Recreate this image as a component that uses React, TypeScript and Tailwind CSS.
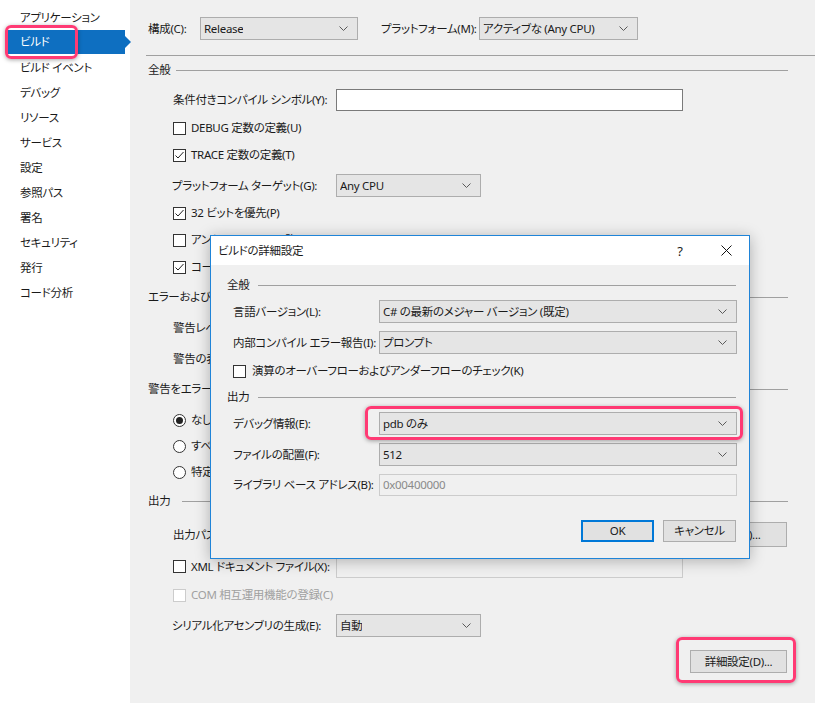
import type { ReactNode } from "react";

const navItems = [
  "アプリケーション",
  "ビルド",
  "ビルド イベント",
  "デバッグ",
  "リソース",
  "サービス",
  "設定",
  "参照パス",
  "署名",
  "セキュリティ",
  "発行",
  "コード分析",
];

function cn(...parts: (string | false | undefined)[]) {
  return parts.filter(Boolean).join(" ");
}

function Chevron() {
  return (
    <svg width="9" height="5" viewBox="0 0 9 5" className="shrink-0">
      <polyline points="0.5,0.5 4.5,4.5 8.5,0.5" fill="none" stroke="#5a5a5a" strokeWidth="1" />
    </svg>
  );
}

function Select({ value, className = "" }: { value: string; className?: string }) {
  return (
    <div
      className={`flex shrink-0 items-center justify-between border border-[#adadad] bg-[#e5e5e5] pl-[3px] pr-[9px] ${className}`}
    >
      <span className="truncate leading-[16px]">{value}</span>
      <Chevron />
    </div>
  );
}

function TextBox({
  value = "",
  disabled = false,
  className = "",
}: {
  value?: string;
  disabled?: boolean;
  className?: string;
}) {
  return (
    <div
      className={cn(
        "flex shrink-0 items-center border pl-[3px]",
        disabled ? "border-[#cccccc] bg-[#f0f0f0] text-[#8a8a8a]" : "border-[#7a7a7a] bg-white",
        className
      )}
    >
      {value}
    </div>
  );
}

function Checkbox({ checked = false, disabled = false }: { checked?: boolean; disabled?: boolean }) {
  return (
    <div
      className={cn(
        "flex h-[13px] w-[13px] shrink-0 items-center justify-center border bg-white",
        disabled ? "border-[#cccccc]" : "border-[#333333]"
      )}
    >
      {checked && (
        <svg width="11" height="11" viewBox="0 0 11 11">
          <polyline points="1.5,5.5 4,8 9.5,2" fill="none" stroke="#222" strokeWidth="1" />
        </svg>
      )}
    </div>
  );
}

function Radio({ checked = false }: { checked?: boolean }) {
  return (
    <div className="flex h-[13px] w-[13px] shrink-0 items-center justify-center rounded-full border border-[#333333] bg-white">
      {checked && <div className="h-[7px] w-[7px] rounded-full bg-[#222]" />}
    </div>
  );
}

function Button({ children, className = "" }: { children: ReactNode; className?: string }) {
  return (
    <div className={`flex shrink-0 items-center justify-center border border-[#adadad] bg-[#e1e1e1] ${className}`}>
      {children}
    </div>
  );
}

function Label({ children, className = "" }: { children: ReactNode; className?: string }) {
  return <span className={`shrink-0 whitespace-nowrap ${className}`}>{children}</span>;
}

function Section({ title, gap = "ml-[6px]", className = "" }: { title: string; gap?: string; className?: string }) {
  return (
    <div className={`flex h-[20px] items-center ${className}`}>
      <Label>{title}</Label>
      <div className={`h-px flex-1 bg-[#a0a0a0] ${gap}`} />
    </div>
  );
}

function Highlight({ className }: { className: string }) {
  return (
    <span
      className={`pointer-events-none absolute rounded-[6px] border-[3px] border-[#ff3a74] shadow-[0_1px_4px_rgba(0,0,0,0.35)] ${className}`}
    />
  );
}

function Sidebar() {
  return (
    <div className="w-[130px] shrink-0 bg-white pt-[5px]">
      {navItems.map((item) =>
        item === "ビルド" ? (
          <div key={item} className="relative h-[25px]">
            <div className="relative ml-[8px] flex h-[24px] w-[117px] items-center bg-[#0e6fc1] pl-[12px] text-white">
              {item}
              <span className="absolute right-[-6px] top-1/2 -translate-y-1/2 border-y-[6px] border-l-[6px] border-y-transparent border-l-[#0e6fc1]" />
            </div>
            <Highlight className="left-[5px] top-[-5px] h-[34px] w-[73px]" />
          </div>
        ) : (
          <div key={item} className="flex h-[25px] items-center pl-[20px]">
            {item}
          </div>
        )
      )}
    </div>
  );
}

function MainPanel() {
  return (
    <div className="flex-1 bg-[#f0f0f0] pl-[18px] pt-[17px]">
      <div className="flex h-[23px] items-center">
        <Label className="w-[52px]">構成(C):</Label>
        <Select value="Release" className="h-[23px] w-[158px]" />
        <Label className="ml-[23px] w-[98px]">プラットフォーム(M):</Label>
        <Select value="アクティブな (Any CPU)" className="h-[23px] w-[159px]" />
      </div>
      <div className="-ml-[2px] mt-[15px] h-px bg-[#a0a0a0]" />

      <Section title="全般" className="mr-[27px] mt-[4px]" />
      <div className="mt-[9px] flex h-[22px] items-center pl-[25px]">
        <Label className="w-[163px]">条件付きコンパイル シンボル(Y):</Label>
        <TextBox className="h-[22px] w-[347px]" />
      </div>
      <div className="mt-[7px] flex h-[20px] items-center pl-[25px]">
        <Checkbox />
        <Label className="ml-[5px]">DEBUG 定数の定義(U)</Label>
      </div>
      <div className="mt-[7px] flex h-[20px] items-center pl-[25px]">
        <Checkbox checked />
        <Label className="ml-[5px]">TRACE 定数の定義(T)</Label>
      </div>
      <div className="mt-[9px] flex h-[23px] items-center pl-[24px]">
        <Label className="w-[164px]">プラットフォーム ターゲット(G):</Label>
        <Select value="Any CPU" className="h-[23px] w-[145px]" />
      </div>
      <div className="mt-[6px] flex h-[20px] items-center pl-[25px]">
        <Checkbox checked />
        <Label className="ml-[5px]">32 ビットを優先(P)</Label>
      </div>
      <div className="mt-[7px] flex h-[20px] items-center pl-[25px]">
        <Checkbox />
        <Label className="ml-[5px]">アンセーフ コードの許可(F)</Label>
      </div>
      <div className="mt-[7px] flex h-[20px] items-center pl-[25px]">
        <Checkbox checked />
        <Label className="ml-[5px]">コードの最適化(Z)</Label>
      </div>

      <Section title="エラーおよび警告" className="mr-[27px] mt-[10px]" />
      <div className="mt-[10px] flex h-[22px] items-center pl-[25px]">
        <Label className="w-[163px]">警告レベル(A):</Label>
        <Select value="4" className="h-[22px] w-[145px]" />
      </div>
      <div className="mt-[9px] flex h-[22px] items-center pl-[25px]">
        <Label className="w-[163px]">警告の表示を抑制(S):</Label>
        <TextBox className="h-[22px] w-[347px]" />
      </div>

      <Section title="警告をエラーとして扱う" className="mr-[27px] mt-[9px]" />
      <div className="mt-[11px] flex h-[20px] items-center pl-[25px]">
        <Radio checked />
        <Label className="ml-[5px]">なし(N)</Label>
      </div>
      <div className="mt-[6px] flex h-[20px] items-center pl-[25px]">
        <Radio />
        <Label className="ml-[5px]">すべて(L)</Label>
      </div>
      <div className="mt-[6px] flex h-[20px] items-center pl-[25px]">
        <Radio />
        <Label className="ml-[5px]">特定の警告(W):</Label>
      </div>

      <Section title="出力" gap="ml-[12px]" className="mr-[27px] mt-[9px]" />
      <div className="mr-[28px] mt-[11px] flex h-[25px] items-center pl-[25px]">
        <Label className="w-[163px]">出力パス(O):</Label>
        <TextBox value="bin\Release\" className="h-[22px] w-[347px]" />
        <Button className="ml-auto h-[25px] w-[97px]">参照(R)...</Button>
      </div>
      <div className="mt-[8px] flex h-[23px] items-center pl-[25px]">
        <Checkbox />
        <Label className="ml-[5px] w-[145px]">XML ドキュメント ファイル(X):</Label>
        <TextBox disabled className="h-[23px] w-[347px]" />
      </div>
      <div className="mt-[7px] flex h-[20px] items-center pl-[25px] text-[#a0a0a0]">
        <Checkbox disabled />
        <Label className="ml-[5px]">COM 相互運用機能の登録(C)</Label>
      </div>
      <div className="mt-[9px] flex h-[23px] items-center pl-[24px]">
        <Label className="w-[164px]">シリアル化アセンブリの生成(E):</Label>
        <Select value="自動" className="h-[23px] w-[145px]" />
      </div>
      <div className="mr-[28px] mt-[13px] flex justify-end">
        <div className="relative">
          <Button className="h-[23px] w-[97px] whitespace-nowrap">詳細設定(D)...</Button>
          <Highlight className="-bottom-[10px] -left-[14px] -right-[9px] -top-[13px]" />
        </div>
      </div>
    </div>
  );
}

function AdvancedDialog() {
  return (
    <div className="absolute left-[210px] top-[235px] flex h-[324px] w-[540px] flex-col border border-[#1f84d8] bg-[#f0f0f0] shadow-[0_2px_14px_rgba(0,0,0,0.28)]">
      <div className="flex h-[29px] shrink-0 items-center bg-white pl-[7px]">
        <Label>ビルドの詳細設定</Label>
        <span className="ml-auto w-[46px] text-center text-[13px]">?</span>
        <span className="flex w-[46px] justify-center">
          <svg width="11" height="11" viewBox="0 0 11 11">
            <path d="M0.5 0.5 L10.5 10.5 M10.5 0.5 L0.5 10.5" stroke="#111" strokeWidth="1" />
          </svg>
        </span>
      </div>
      <div className="pl-[16px] pr-[12px] pt-[10px]">
        <Section title="全般" gap="ml-[9px]" className="mr-px" />
        <div className="mt-[5px] flex h-[23px] items-center pl-[6px]">
          <Label className="w-[146px]">言語バージョン(L):</Label>
          <Select value="C# の最新のメジャー バージョン (既定)" className="h-[23px] flex-1" />
        </div>
        <div className="mt-[8px] flex h-[23px] items-center pl-[6px]">
          <Label className="w-[146px]">内部コンパイル エラー報告(I):</Label>
          <Select value="プロンプト" className="h-[23px] flex-1" />
        </div>
        <div className="mt-[7px] flex h-[20px] items-center pl-[6px]">
          <Checkbox />
          <Label className="ml-[6px]">演算のオーバーフローおよびアンダーフローのチェック(K)</Label>
        </div>

        <Section title="出力" gap="ml-[9px]" className="mr-px mt-[6px]" />
        <div className="mt-[5px] flex h-[23px] items-center pl-[6px]">
          <Label className="w-[146px]">デバッグ情報(E):</Label>
          <div className="relative flex-1">
            <Select value="pdb のみ" className="h-[23px]" />
            <Highlight className="-bottom-[5px] -left-[14px] -right-[6px] -top-[6px]" />
          </div>
        </div>
        <div className="mt-[8px] flex h-[23px] items-center pl-[6px]">
          <Label className="w-[146px]">ファイルの配置(F):</Label>
          <Select value="512" className="h-[23px] flex-1" />
        </div>
        <div className="mt-[8px] flex h-[22px] items-center pl-[6px]">
          <Label className="w-[146px]">ライブラリ ベース アドレス(B):</Label>
          <TextBox disabled value="0x00400000" className="h-[22px] flex-1" />
        </div>

        <div className="mt-[24px] flex justify-end gap-[9px] pr-px">
          <div className="flex h-[22px] w-[73px] items-center justify-center border-2 border-[#0078d7] bg-[#e1e1e1]">
            OK
          </div>
          <Button className="h-[22px] w-[73px]">キャンセル</Button>
        </div>
      </div>
    </div>
  );
}

export default function App() {
  return (
    <div className="relative flex h-[703px] w-[815px] overflow-hidden whitespace-nowrap font-['Noto_Sans','Noto_Sans_CJK_JP',sans-serif] text-[11.5px] leading-[16px] tracking-[-0.3px] text-[#1a1a1a] [font-feature-settings:'palt']">
      <Sidebar />
      <MainPanel />
      <AdvancedDialog />
    </div>
  );
}
